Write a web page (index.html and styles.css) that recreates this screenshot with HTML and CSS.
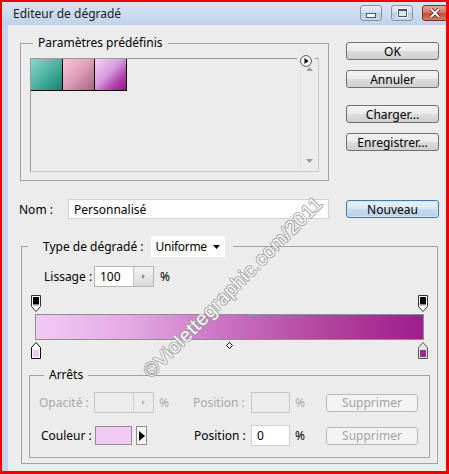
FILE: index.html
```html
<!DOCTYPE html>
<html lang="fr">
<head>
    <meta charset="UTF-8">
    <title>Editeur de dégradé</title>
    <link rel="stylesheet" href="styles.css">
</head>
<body>
    <div class="frame">
        <div class="titlebar">
            <span class="title">Editeur de dégradé</span>
            <div class="caption">
                <span class="cap cap-min"><span class="glyph-min"></span></span>
                <span class="cap cap-max"><span class="glyph-max"></span></span>
                <span class="cap cap-close">
                    <svg width="12" height="10" viewBox="0 0 12 10"><path d="M2 1 L10 9 M10 1 L2 9" stroke="#4a1a12" stroke-width="3.4"/><path d="M2 1 L10 9 M10 1 L2 9" stroke="#fff" stroke-width="2"/></svg>
                </span>
            </div>
        </div>

        <div class="client">
            <div class="dialog">
                <div class="top">
                    <!-- Paramètres prédéfinis -->
                    <fieldset class="group presets">
                        <legend>Paramètres prédéfinis</legend>
                        <span class="menu-btn">
                            <svg width="12" height="12" viewBox="0 0 12 12"><circle cx="6" cy="6" r="5.4" fill="#fafafa" stroke="#555"/><path d="M4.5 3 L8.5 6 L4.5 9 Z" fill="#000"/></svg>
                        </span>
                        <div class="preset-list">
                            <div class="swatches">
                                <span class="swatch sw-teal"></span>
                                <span class="swatch sw-pink"></span>
                                <span class="swatch sw-violet"></span>
                            </div>
                            <div class="scroll">
                                <svg width="7" height="4" viewBox="0 0 7 4"><path d="M0 4 L3.5 0 L7 4 Z" fill="#9a9a9a"/></svg>
                                <svg width="7" height="4" viewBox="0 0 7 4"><path d="M0 0 L3.5 4 L7 0 Z" fill="#9a9a9a"/></svg>
                            </div>
                        </div>
                    </fieldset>

                    <div class="actions">
                        <div class="btn">OK</div>
                        <div class="btn">Annuler</div>
                        <div class="btn gap-big">Charger...</div>
                        <div class="btn">Enregistrer...</div>
                    </div>

                    <div class="name-row">
                        <span class="name-label">Nom :</span>
                        <div class="field name-field">Personnalisé</div>
                    </div>
                    <div class="btn btn-default">Nouveau</div>
                </div>

                <!-- Type de dégradé -->
                <fieldset class="group type-group">
                    <legend class="type-legend">
                        <span>Type de dégradé :</span>
                        <span class="select"><span class="select-text">Uniforme</span>
                            <svg width="7" height="4" viewBox="0 0 7 4"><path d="M0 0 L3.5 4 L7 0 Z" fill="#000"/></svg>
                        </span>
                    </legend>

                    <div class="smooth-row">
                        <span class="smooth-label">Lissage :</span>
                        <div class="spin-field">
                            <span class="spin-value">100</span>
                            <span class="spin-btn"><svg width="3" height="5" viewBox="0 0 3 5"><path d="M0 0 L3 2.5 L0 5 Z" fill="#8a8a8a"/></svg></span>
                        </div>
                        <span class="pct">%</span>
                    </div>

                    <div class="ramp">
                        <span class="stop stop-top stop-left">
                            <svg width="10" height="17" viewBox="0 0 10 17"><path d="M0.5 0.5 H9.5 V11.5 L5 16.5 L0.5 11.5 Z" fill="#fff" stroke="#333"/><rect x="2" y="2" width="6" height="7" fill="#000"/><rect x="2" y="9" width="6" height="1.5" fill="#888"/></svg>
                        </span>
                        <span class="stop stop-top stop-right">
                            <svg width="10" height="17" viewBox="0 0 10 17"><path d="M0.5 0.5 H9.5 V11.5 L5 16.5 L0.5 11.5 Z" fill="#fff" stroke="#333"/><rect x="2" y="2" width="6" height="7" fill="#000"/><rect x="2" y="9" width="6" height="1.5" fill="#888"/></svg>
                        </span>
                        <div class="bar"></div>
                        <span class="midpoint">
                            <svg width="7" height="7" viewBox="0 0 7 7"><path d="M3.5 0.5 L6.5 3.5 L3.5 6.5 L0.5 3.5 Z" fill="#fff" stroke="#000"/></svg>
                        </span>
                        <span class="stop stop-bottom stop-left">
                            <svg width="10" height="17" viewBox="0 0 10 17"><path d="M5 0.5 L9.5 5.5 V16.5 H0.5 V5.5 Z" fill="#fff" stroke="#111"/><rect x="2" y="8" width="6" height="7" fill="#f0c8f0"/></svg>
                        </span>
                        <span class="stop stop-bottom stop-right">
                            <svg width="10" height="17" viewBox="0 0 10 17"><path d="M5 0.5 L9.5 5.5 V16.5 H0.5 V5.5 Z" fill="#e4e4e4" stroke="#555"/><rect x="2" y="8" width="6" height="7" fill="#9c2a8e"/></svg>
                        </span>
                    </div>

                    <!-- Arrêts -->
                    <fieldset class="group stops-group">
                        <legend>Arrêts</legend>
                        <div class="stops-grid">
                            <span class="lbl off">Opacité :</span>
                            <div class="spin-field off">
                                <span class="spin-value"></span>
                                <span class="spin-btn"><svg width="3" height="5" viewBox="0 0 3 5"><path d="M0 0 L3 2.5 L0 5 Z" fill="#b4b4b4"/></svg></span>
                            </div>
                            <span class="pct off">%</span>
                            <span class="lbl off">Position :</span>
                            <div class="field pos-field off"></div>
                            <span class="pct off">%</span>
                            <div class="btn btn-off">Supprimer</div>

                            <span class="lbl lbl-color">Couleur :</span>
                            <div class="color-pick">
                                <span class="color-swatch"></span>
                                <span class="color-arrow"><svg width="6" height="10" viewBox="0 0 6 10"><path d="M0 0 L6 5 L0 10 Z" fill="#000"/></svg></span>
                            </div>
                            <span></span>
                            <span class="lbl lbl-pos">Position :</span>
                            <div class="field pos-field">0</div>
                            <span class="pct">%</span>
                            <div class="btn btn-off">Supprimer</div>
                        </div>
                    </fieldset>
                </fieldset>
            </div>
        </div>

        <div class="watermark">©Violettegraphic.com/2011</div>
    </div>
</body>
</html>
```

FILE: styles.css
```css
body {
    margin: 0;
    font-family: "Segoe UI", "Noto Sans", sans-serif;
    font-size: 12px;
    color: #000;
}

.frame {
    position: relative;
    width: 449px;
    height: 474px;
    box-sizing: border-box;
    border: solid #f00000;
    border-width: 2px 3px 3px 2px;
    background: #c3d7ec;
    display: flex;
    flex-direction: column;
    overflow: hidden;
}

/* barre de titre */
.titlebar {
    height: 23px;
    flex: none;
    display: flex;
    align-items: center;
    padding-left: 11px;
    background: linear-gradient(#d6e5f4, #bed3ea);
}

.title {
    color: #1b1b1b;
}

.caption {
    margin-left: auto;
    align-self: flex-start;
    margin-top: 3px;
    display: flex;
    gap: 9px;
}

.cap {
    height: 16px;
    box-sizing: border-box;
    border: 1px solid #7d93ad;
    border-radius: 3px;
    display: flex;
    align-items: center;
    justify-content: center;
    background: linear-gradient(#e6eef7, #ccdcec 50%, #b7cbe1 51%, #c9dbee);
}

.cap-min,
.cap-max {
    width: 22px;
}

.cap-close {
    width: 26px;
    margin-right: -2px;
    border-color: #7a2f25;
    background: linear-gradient(#e8a493, #d4725f 50%, #c24a34 51%, #d97b63);
}

.glyph-min {
    width: 8px;
    height: 3px;
    margin-top: 4px;
    background: #fff;
    border: 1px solid #45566b;
}

.glyph-max {
    width: 7px;
    height: 5px;
    border: 1px solid #45566b;
    border-top-width: 2px;
    background: #dfe8f2;
    box-shadow: 0 0 0 1px #fff;
}

.client {
    flex: 1;
    display: flex;
    padding-left: 6px;
}

.dialog {
    flex: 1;
    background: #ececec;
    padding: 10px 0 0 12px;
}

/* cadres */
.group {
    margin: 0;
    min-width: 0;
    border: 1px solid #a2a2a2;
}

.group legend {
    padding: 0 5px;
    line-height: 16px;
}

.top {
    display: grid;
    grid-template-columns: 309px 93px;
    column-gap: 17px;
    row-gap: 18px;
}

.presets {
    position: relative;
    padding: 7px 9px 8px 9px;
}

.presets legend {
    margin-left: 3px;
}

.menu-btn {
    position: absolute;
    left: 276px;
    top: 4px;
    padding: 0 3px;
    background: #ececec;
    display: flex;
}

.preset-list {
    height: 114px;
    box-sizing: border-box;
    border: 1px solid #9a9a9a;
    border-right-color: #c8c8c8;
    border-bottom-color: #c8c8c8;
    display: flex;
    justify-content: space-between;
}

.swatches {
    display: flex;
    align-self: flex-start;
}

.swatch {
    width: 31px;
    height: 31px;
    border-right: 1px solid #000;
    border-bottom: 1px solid #000;
}

.sw-teal {
    background: linear-gradient(135deg, #8ad6cb, #46ad9c 55%, #17816f);
}

.sw-pink {
    background: linear-gradient(135deg, #f7c6d8, #dc9db6 50%, #a9617f);
}

.sw-violet {
    background: linear-gradient(135deg, #f3d2f5, #d79add 45%, #b23ea9 75%, #98158f);
}

.scroll {
    width: 17px;
    border-left: 1px solid #e2e2e2;
    display: flex;
    flex-direction: column;
    justify-content: space-between;
    align-items: center;
    padding: 8px 0 8px;
}

/* boutons */
.actions {
    display: flex;
    flex-direction: column;
    gap: 10px;
    padding-top: 7px;
}

.actions .gap-big {
    margin-top: 7px;
}

.btn {
    height: 18px;
    box-sizing: border-box;
    border: 1px solid #707070;
    border-radius: 3px;
    background: linear-gradient(#f3f3f3, #ebebeb 50%, #dcdcdc 51%, #cfcfcf);
    display: flex;
    align-items: center;
    justify-content: center;
}

.btn-default {
    align-self: center;
    border-color: #3d7bad;
    background: linear-gradient(#e8f1f9, #d9e7f3 50%, #c5d9ec 51%, #bcd2e8);
    box-shadow: inset 0 0 0 1px #cfe6f8;
}

.btn-off {
    width: 92px;
    border-color: #b8b8b8;
    background: #f3f3f3;
    color: #a4a4a4;
}

.name-row {
    display: flex;
    align-items: center;
    margin-left: -1px;
}

.name-label {
    width: 49px;
}

.field {
    height: 20px;
    box-sizing: border-box;
    background: #fff;
    border: 1px solid #d2d2d2;
    display: flex;
    align-items: center;
    padding-left: 5px;
}

.name-field {
    flex: 1;
}

/* Type de dégradé */
.type-group {
    margin: 17px 0 0 1px;
    width: 417px;
    box-sizing: border-box;
    padding: 9px 7px 5px 7px;
}

.group .type-legend {
    display: flex;
    align-items: center;
    gap: 7px;
    padding: 0 8px 0 15px;
    margin-left: -1px;
    line-height: 16px;
}

.select {
    height: 21px;
    width: 74px;
    box-sizing: border-box;
    background: #fff;
    display: flex;
    align-items: center;
    gap: 6px;
    padding-left: 5px;
}

.select-text {
    letter-spacing: -0.3px;
}

.smooth-row {
    display: flex;
    align-items: center;
    margin-left: 15px;
}

.smooth-label {
    width: 50px;
}

.spin-field {
    width: 60px;
    height: 21px;
    box-sizing: border-box;
    background: #fff;
    border: 1px solid #b5b5b5;
    display: flex;
}

.spin-value {
    flex: 1;
    padding-left: 5px;
    display: flex;
    align-items: center;
}

.spin-btn {
    width: 19px;
    border-left: 1px solid #c4c4c4;
    background: linear-gradient(#f3f3f3, #dadada);
    display: flex;
    align-items: center;
    justify-content: center;
}

.pct {
    padding-left: 5px;
}

.smooth-row .pct {
    padding-left: 6px;
}

/* rampe du dégradé */
.ramp {
    position: relative;
    margin: 8px 6px 0;
    padding: 19px 0;
}

.bar {
    height: 26px;
    box-sizing: border-box;
    border: 1px solid #8e8e8e;
    background: linear-gradient(to right, #f1caf3, #e2a8e2 25%, #c96fc1 50%, #b2449f 75%, #9e1d8c);
}

.stop {
    position: absolute;
    display: flex;
}

.stop-top {
    top: 0;
}

.stop-bottom {
    bottom: 0;
}

.stop-left {
    left: -4px;
}

.stop-right {
    right: -4px;
}

.midpoint {
    position: absolute;
    left: 50%;
    top: 47px;
    margin-left: -4px;
    display: flex;
}

/* Arrêts */
.stops-group {
    margin-top: 8px;
    padding: 9px 9px 11px 9px;
}

.stops-group legend {
    margin-left: 5px;
}

.stops-grid {
    display: grid;
    grid-template-columns: 55px 60px 39px 58px 39px 36px 92px;
    grid-auto-rows: 21px;
    row-gap: 12px;
    align-items: center;
}

.off {
    color: #a8a8a8;
}

.spin-field.off,
.field.off {
    background: #ececec;
    border-color: #c6c6c6;
}

.spin-field.off .spin-btn {
    background: #ececec;
    border-left-color: #cfcfcf;
}

.pos-field {
    height: 21px;
}

.lbl-color {
    padding-left: 2px;
}

.lbl-pos {
    padding-left: 1px;
}

.color-pick {
    display: flex;
    gap: 4px;
    padding-left: 1px;
}

.color-swatch {
    width: 37px;
    height: 19px;
    box-sizing: border-box;
    border: 1px solid #8e8e8e;
    background: #f0caf2;
}

.color-arrow {
    width: 11px;
    height: 19px;
    box-sizing: border-box;
    border: 1px solid #8e8e8e;
    background: #f4f4f4;
    display: flex;
    align-items: center;
    justify-content: center;
}

/* filigrane */
.watermark {
    position: absolute;
    left: 231px;
    top: 285px;
    transform: translate(-50%, -50%) rotate(-45.3deg);
    white-space: nowrap;
    font-family: "Liberation Sans", sans-serif;
    font-size: 19.5px;
    letter-spacing: 0.5px;
    color: rgba(255, 255, 255, 0.95);
    text-shadow: 1px 0 0 #a0a0a0, -1px 0 0 #a0a0a0, 0 1px 0 #a0a0a0, 0 -1px 0 #a0a0a0;
    pointer-events: none;
}
```
